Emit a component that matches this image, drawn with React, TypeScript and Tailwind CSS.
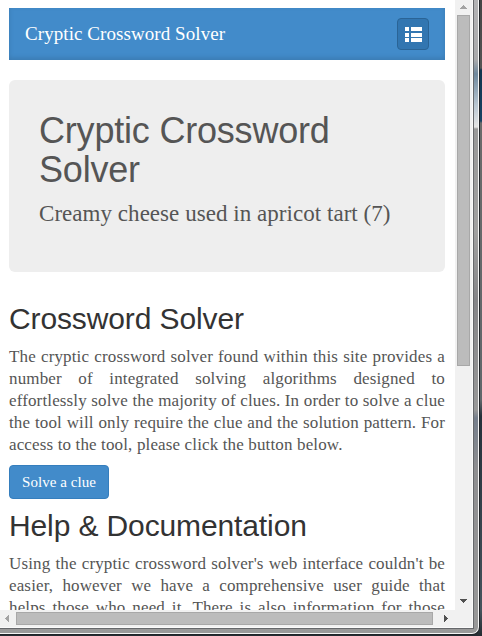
import type { ReactNode } from "react";

const serif = "font-['Georgia','Liberation_Serif',serif]";
const sans = "font-['Liberation_Sans',Arial,sans-serif]";

function Line({ children, last = false }: { children: ReactNode; last?: boolean }) {
  return (
    <span className={`block h-[22px] whitespace-nowrap ${last ? "" : "[text-align-last:justify]"}`}>
      {children}
    </span>
  );
}

function Heading({ children }: { children: ReactNode }) {
  return (
    <h2 className={`${sans} h-[33px] text-[30px] leading-[33px] tracking-[-0.12px] whitespace-nowrap text-[#333]`}>
      {children}
    </h2>
  );
}

function ListIcon() {
  return (
    <svg width="17" height="15" viewBox="0 0 17 15" fill="#fff" shapeRendering="crispEdges">
      <path d="M0 0h4v4H0zM6 0h11v4H6zM0 6h4v4H0zM6 6h11v4H6zM0 11h4v4H0zM6 11h11v4H6z" />
    </svg>
  );
}

function VerticalScrollbar() {
  return (
    <div className="flex h-[610px] w-[17px] shrink-0 flex-col bg-[#f1f1f1]">
      <svg className="h-[15px] w-[17px] shrink-0" viewBox="0 0 17 15" shapeRendering="crispEdges">
        <path d="M8 5h1v1h1v1h1v1h1v1H5V8h1V7h1V6h1z" fill="#a3a3a3" />
      </svg>
      <div className="ml-[2px] h-[351px] w-[13px] shrink-0 border border-[#a8a8a8] bg-[#bcbcbc]" />
      <svg className="mt-auto h-[17px] w-[17px] shrink-0" viewBox="0 0 17 17" shapeRendering="crispEdges">
        <path d="M5 6h7v1h-1v1h-1v1H9v1H8V9H7V8H6V7H5z" fill="#505050" />
      </svg>
    </div>
  );
}

function HorizontalScrollbar() {
  return (
    <div className="flex h-[17px] w-full items-start bg-[#f1f1f1]">
      <svg className="h-[17px] w-[16px] shrink-0" viewBox="0 0 16 17" shapeRendering="crispEdges">
        <path d="M9 5v7H8v-1H7v-1H6V9H5V8h1V7h1V6h1V5z" fill="#a3a3a3" />
      </svg>
      <div className="mt-[2px] h-[13px] w-[417px] border border-[#a8a8a8] bg-[#bcbcbc]" />
      <svg className="ml-[6px] h-[17px] w-[17px] shrink-0" viewBox="0 0 17 17" shapeRendering="crispEdges">
        <path d="M5 5h1v1h1v1h1v1h1v1H8v1H7v1H6v1H5z" fill="#505050" />
      </svg>
    </div>
  );
}

function Page() {
  return (
    <div className={`${serif} h-[610px] w-[455px] shrink-0 overflow-hidden bg-white pt-2 pr-[10px] pl-[9px] text-[#555]`}>
      <nav className="flex h-[52px] items-center justify-between bg-[#428bca] pr-4 pl-4 shadow-[inset_0_-2px_5px_rgba(0,0,0,0.12)]">
        <span className="text-[19px] tracking-[0.07px] whitespace-nowrap text-white">Cryptic Crossword Solver</span>
        <button className="flex h-8 w-8 items-center justify-center rounded-[4px] border border-[#2a6496] bg-[#3276b1] pt-px">
          <ListIcon />
        </button>
      </nav>

      <header className="mt-5 h-[192px] rounded-[6px] bg-[#eee] px-[30px] pt-[31px]">
        <h1 className={`${sans} text-[36px] leading-[39px] tracking-[-0.2px] text-[#555]`}>
          Cryptic Crossword
          <br />
          Solver
        </h1>
        <p className="mt-[10px] text-[23px] leading-[30px] tracking-[0.04px] whitespace-nowrap">
          Creamy cheese used in apricot tart (7)
        </p>
      </header>

      <section className="pt-[30px]">
        <Heading>Crossword Solver</Heading>
        <p className="mt-[11px] text-[17px] leading-[22px] tracking-[0.14px]">
          <Line>The cryptic crossword solver found within this site provides a</Line>
          <Line>number of integrated solving algorithms designed to</Line>
          <Line>effortlessly solve the majority of clues. In order to solve a clue</Line>
          <Line>the tool will only require the clue and the solution pattern. For</Line>
          <Line last>access to the tool, please click the button below.</Line>
        </p>
        <button className="mt-[9px] flex h-[34px] w-[100px] items-center justify-center rounded-[4px] border border-[#357ebd] bg-[#428bca] text-[15px] tracking-[0.06px] whitespace-nowrap text-white">
          Solve a clue
        </button>
      </section>

      <section className="pt-[10px]">
        <Heading>Help &amp; Documentation</Heading>
        <p className="mt-[11px] text-[17px] leading-[22px] tracking-[0.14px]">
          <Line>Using the cryptic crossword solver's web interface couldn't be</Line>
          <Line>easier, however we have a comprehensive user guide that</Line>
          <Line>helps those who need it. There is also information for those</Line>
        </p>
      </section>
    </div>
  );
}

export default function App() {
  return (
    <div className="h-[636px] w-[482px] overflow-hidden bg-[linear-gradient(to_bottom,#444_0,#555_68px,#12354f_70px,#174263_121px,#6b6b6b_123px,#60676b_400px,#25313b_416px,#46545d_610px,#242b31_636px)]">
      <div className="h-[635px] w-[480px] rounded-br-[8px] border-r border-b border-[#202428] bg-[#202428]">
        <div className="h-[634px] w-[479px] rounded-br-[7px] border-r border-b border-[#f5f5f5] bg-[linear-gradient(to_bottom,#b3b3b5_0,#aaaaac_60px,#6f889d_74px,#b9c6d1_105px,#e5e5e5_127px,#999_129px,#a1a1a1_230px,#858588_300px,#999_410px,#767f8c_418px,#8f8f91_470px,#999_632px)]">
          <div className="h-[629px] w-[474px] border-r border-b border-[#66686b] bg-[#fafafa]">
            <div className="flex h-[627px] w-[472px] flex-col">
              <div className="flex">
                <Page />
                <VerticalScrollbar />
              </div>
              <HorizontalScrollbar />
            </div>
          </div>
        </div>
      </div>
    </div>
  );
}
